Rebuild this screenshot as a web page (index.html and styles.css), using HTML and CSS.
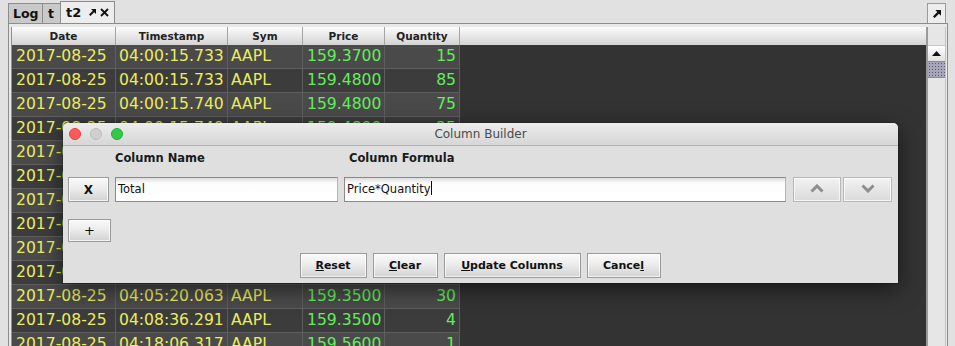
FILE: index.html
```html
<!DOCTYPE html>
<html>
<head>
  <meta charset="utf-8">
  <title>t2 - Column Builder</title>
  <link rel="stylesheet" href="styles.css">
</head>
<body>
  <div class="app">

    <div class="tabbar">
      <div class="tab tab-log">Log</div>
      <div class="tab tab-t">t</div>
      <div class="tab selected">
        <span>t2</span>
        <svg class="popout" width="7" height="7" viewBox="0 0 7 7"><path d="M2 0h5v5L5.2 3.2 1.4 7 0 5.6 3.8 1.8z" fill="#111"/></svg>
        <svg class="close" width="9" height="9" viewBox="0 0 9 9"><path d="M1 1l7 7M8 1L1 8" stroke="#111" stroke-width="1.8"/></svg>
      </div>
      <div class="corner-btn">
        <svg width="8" height="8" viewBox="0 0 7 7"><path d="M2 0h5v5L5.2 3.2 1.4 7 0 5.6 3.8 1.8z" fill="#111"/></svg>
      </div>
    </div>

    <div class="panel">
      <div class="view">
        <div class="grid">
          <div class="row head">
            <div>Date</div><div>Timestamp</div><div>Sym</div><div>Price</div><div>Quantity</div><div class="fill"></div>
          </div>
          <div class="row"><div class="y">2017-08-25</div><div class="y">04:00:15.733</div><div class="y">AAPL</div><div class="g">159.3700</div><div class="g num">15</div></div>
          <div class="row"><div class="y">2017-08-25</div><div class="y">04:00:15.733</div><div class="y">AAPL</div><div class="g">159.4800</div><div class="g num">85</div></div>
          <div class="row"><div class="y">2017-08-25</div><div class="y">04:00:15.740</div><div class="y">AAPL</div><div class="g">159.4800</div><div class="g num">75</div></div>
          <div class="row"><div class="y">2017-08-25</div><div class="y">04:00:15.740</div><div class="y">AAPL</div><div class="g">159.4800</div><div class="g num">25</div></div>
          <div class="row"><div class="y">2017-08-25</div><div class="y">04:00:16.102</div><div class="y">AAPL</div><div class="g">159.4800</div><div class="g num">10</div></div>
          <div class="row"><div class="y">2017-08-25</div><div class="y">04:00:17.388</div><div class="y">AAPL</div><div class="g">159.4500</div><div class="g num">50</div></div>
          <div class="row"><div class="y">2017-08-25</div><div class="y">04:00:22.914</div><div class="y">AAPL</div><div class="g">159.4500</div><div class="g num">100</div></div>
          <div class="row"><div class="y">2017-08-25</div><div class="y">04:01:03.560</div><div class="y">AAPL</div><div class="g">159.4000</div><div class="g num">20</div></div>
          <div class="row"><div class="y">2017-08-25</div><div class="y">04:02:41.007</div><div class="y">AAPL</div><div class="g">159.3800</div><div class="g num">5</div></div>
          <div class="row"><div class="y">2017-08-25</div><div class="y">04:03:55.412</div><div class="y">AAPL</div><div class="g">159.3600</div><div class="g num">40</div></div>
          <div class="row"><div class="y">2017-08-25</div><div class="y">04:05:20.063</div><div class="y">AAPL</div><div class="g">159.3500</div><div class="g num">30</div></div>
          <div class="row"><div class="y">2017-08-25</div><div class="y">04:08:36.291</div><div class="y">AAPL</div><div class="g">159.3500</div><div class="g num">4</div></div>
          <div class="row"><div class="y">2017-08-25</div><div class="y">04:18:06.317</div><div class="y">AAPL</div><div class="g">159.5600</div><div class="g num">1</div></div>
        </div>
        <div class="vscroll">
          <div class="sb-corner"></div>
          <div class="sb-arrow">
            <svg width="9" height="5" viewBox="0 0 9 5"><path d="M4.5 0L9 5H0z" fill="#111"/></svg>
          </div>
          <div class="sb-thumb"></div>
        </div>
      </div>
    </div>

    <!-- Column Builder dialog, floating over the table -->
    <div class="dialog">
      <div class="titlebar">
        <div class="lights">
          <span class="light red"></span><span class="light grey"></span><span class="light green"></span>
        </div>
        <div class="title">Column Builder</div>
      </div>
      <div class="dlg-body">
        <div class="labels">
          <div class="lbl-name">Column Name</div>
          <div class="lbl-formula">Column Formula</div>
        </div>
        <div class="col-row">
          <button class="btn btn-x">X</button>
          <div class="field field-name">Total</div>
          <div class="field field-formula">Price*Quantity<span class="caret"></span></div>
          <button class="btn btn-move">
            <svg width="14" height="9" viewBox="0 0 14 9"><path d="M1.5 7.5L7 2l5.5 5.5" fill="none" stroke="#8e8e8e" stroke-width="3"/></svg>
          </button>
          <button class="btn btn-move down">
            <svg width="14" height="9" viewBox="0 0 14 9"><path d="M1.5 1.5L7 7l5.5-5.5" fill="none" stroke="#8e8e8e" stroke-width="3"/></svg>
          </button>
        </div>
        <button class="btn btn-add">+</button>
        <div class="footer">
          <button class="btn btn-reset"><u>R</u>eset</button>
          <button class="btn btn-clear"><u>C</u>lear</button>
          <button class="btn btn-update"><u>U</u>pdate Columns</button>
          <button class="btn btn-cancel">Cance<u>l</u></button>
        </div>
      </div>
    </div>

  </div>
</body>
</html>
```

FILE: styles.css
```css
body {
   margin: 0;
   background-color: #e1e1e1;
   font-family: "DejaVu Sans", Verdana, sans-serif;
}

.app {
   position: relative;
   width: 955px;
   height: 346px;
   overflow: hidden;
   background-color: #e1e1e1;
}

/* ---------- tabs ---------- */

.tabbar {
   display: flex;
   align-items: flex-end;
   height: 23px;
   padding: 0 8px;
}

.tab {
   box-sizing: border-box;
   height: 20px;
   padding: 0 4px;
   border: 1px solid #8c8c8c;
   border-bottom: none;
   border-right: none;
   background-color: #c9c9c9;
   font-size: 12.5px;
   font-weight: bold;
   line-height: 20px;
   color: #111;
}

.tab-log {
   width: 34px;
}

.tab-t {
   width: 18px;
   padding-left: 5px;
}

.tab.selected {
   display: flex;
   align-items: center;
   width: 55px;
   height: 22px;
   padding: 0 0 0 5px;
   border-right: 1px solid #8c8c8c;
   background-color: #ededed;
   font-size: 13px;
}

.tab.selected span {
   width: 23px;
}

.tab.selected .close {
   margin-left: 4px;
}

.corner-btn {
   display: flex;
   align-items: center;
   justify-content: center;
   margin-left: auto;
   margin-right: 1px;
   width: 17px;
   height: 19px;
   border: 1px solid #9a9a9a;
   border-bottom: none;
   background-color: #ededed;
}

/* ---------- table panel ---------- */

.panel {
   height: 323px;
   margin: 0 7px 0 8px;
   padding: 3px 1px 0 2px;
   border: 1px solid #8c8c8c;
   border-bottom: none;
   background-color: #e8e8e8;
   box-sizing: border-box;
}

.view {
   display: flex;
   height: 100%;
}

.grid {
   flex: 1;
   border-left: 1px solid #8e8e8e;
   border-right: 2px solid #9a9a9a;
   background-color: #333333;
   overflow: hidden;
}

.row {
   display: grid;
   grid-template-columns: 104px 112px 75px 82px 75px 1fr;
   height: 24px;
}

.row > div {
   border-right: 1px solid #5e5e5e;
   border-bottom: 1px solid #5e5e5e;
   padding: 0 3px 0 4px;
   font-size: 15.6px;
   line-height: 23px;
   white-space: nowrap;
   overflow: hidden;
}

.row > div:nth-child(2),
.row > div:nth-child(3) {
   padding-left: 3px;
}

.row:nth-child(even) > div {
   background-color: #4a4a4a;
}

.row:nth-child(odd) > div {
   background-color: #3c3c3c;
}

.row.head {
   height: 18px;
}

.row.head > div {
   padding: 0;
   background: linear-gradient(#fbfbfb, #e4e4e4 60%, #d3d3d3);
   border-right: 1px solid #a5a5a5;
   border-bottom: none;
   font-size: 10.5px;
   font-weight: bold;
   line-height: 18px;
   text-align: center;
   color: #222;
}

.row.head > .fill {
   border-right: none;
}

.y {
   color: #ecec5e;
}

.g {
   color: #62ee5a;
}

.num {
   text-align: right;
}

.vscroll {
   width: 17px;
   background-color: #e6e6e6;
   border-right: 1px solid #c4c4c4;
}

.sb-corner {
   height: 18px;
}

.sb-arrow {
   display: flex;
   align-items: center;
   justify-content: center;
   height: 15px;
   background: linear-gradient(#ffffff, #e0e0e0);
   border-top: 1px solid #c8c8c8;
}

.sb-thumb {
   height: 15px;
   background-color: #a6a6bb;
   background-image: radial-gradient(#5a5a6e 0.6px, transparent 0.9px);
   background-size: 3px 3px;
   border-top: 1px solid #8686a0;
   border-bottom: 1px solid #8686a0;
}

/* ---------- Column Builder dialog ---------- */

.dialog {
   position: absolute;
   left: 63px;
   top: 123px;
   width: 835px;
   height: 160px;
   border-radius: 5px 5px 0 0;
   background-color: #dfdfdf;
   box-shadow: 0 6px 22px rgba(0, 0, 0, 0.55), 0 0 0 1px rgba(0, 0, 0, 0.15);
   overflow: hidden;
}

.titlebar {
   position: relative;
   height: 22px;
   border-bottom: 1px solid #b1b1b1;
   background: linear-gradient(#ececec, #d6d6d6);
}

.lights {
   display: flex;
   gap: 9px;
   padding: 5px 0 0 6px;
}

.light {
   width: 12px;
   height: 12px;
   border-radius: 50%;
   box-sizing: border-box;
}

.light.red {
   background-color: #fc5b57;
   border: 1px solid #e1443f;
}

.light.grey {
   background-color: #cfcfcf;
   border: 1px solid #bdbdbd;
}

.light.green {
   background-color: #35c94a;
   border: 1px solid #22ae36;
}

.title {
   position: absolute;
   top: 0;
   left: 0;
   right: 0;
   text-align: center;
   font-size: 12px;
   line-height: 22px;
   color: #4a4a4a;
}

.dlg-body {
   padding: 0 6px 0 5px;
}

.labels {
   display: flex;
   height: 31px;
   padding-left: 47px;
   font-size: 11.5px;
   font-weight: bold;
   line-height: 24px;
   color: #1a1a1a;
}

.lbl-name {
   width: 234px;
}

.col-row {
   display: flex;
   align-items: center;
   height: 25px;
}

.btn {
   display: inline-block;
   height: 25px;
   padding: 0;
   border: 1px solid #9b9b9b;
   background: linear-gradient(#fafafa, #ececec 45%, #d2d2d2);
   box-shadow: inset 0 0 0 1px rgba(255, 255, 255, 0.7);
   font-family: "DejaVu Sans", Verdana, sans-serif;
   font-size: 11px;
   font-weight: bold;
   color: #111;
}

.btn-x {
   width: 41px;
   margin-right: 6px;
   font-size: 12px;
}

.field {
   height: 25px;
   box-sizing: border-box;
   padding-left: 2px;
   border: 1px solid #8a8a8a;
   border-right-color: #b5b5b5;
   background: linear-gradient(#dcdcdc, #fdfdfd 5px, #ffffff);
   font-size: 11.5px;
   line-height: 23px;
   color: #111;
}

.field-name {
   width: 223px;
   margin-right: 6px;
}

.field-formula {
   width: 442px;
   margin-right: 7px;
}

.caret {
   display: inline-block;
   width: 1px;
   height: 14px;
   vertical-align: -2px;
   background-color: #111;
}

.btn-move {
   width: 48px;
   border-color: #b8b8b8;
   background: linear-gradient(#f2f2f2, #dadada);
}

.btn-move.down {
   width: 49px;
   margin-left: 2px;
}

.btn-add {
   display: block;
   width: 43px;
   height: 23px;
   margin-top: 17px;
   font-size: 13px;
   font-weight: normal;
}

.footer {
   display: flex;
   justify-content: center;
   gap: 6px;
   margin-top: 11px;
}

.btn-reset {
   width: 67px;
}

.btn-clear {
   width: 65px;
}

.btn-update {
   width: 137px;
}

.btn-cancel {
   width: 74px;
}
```
